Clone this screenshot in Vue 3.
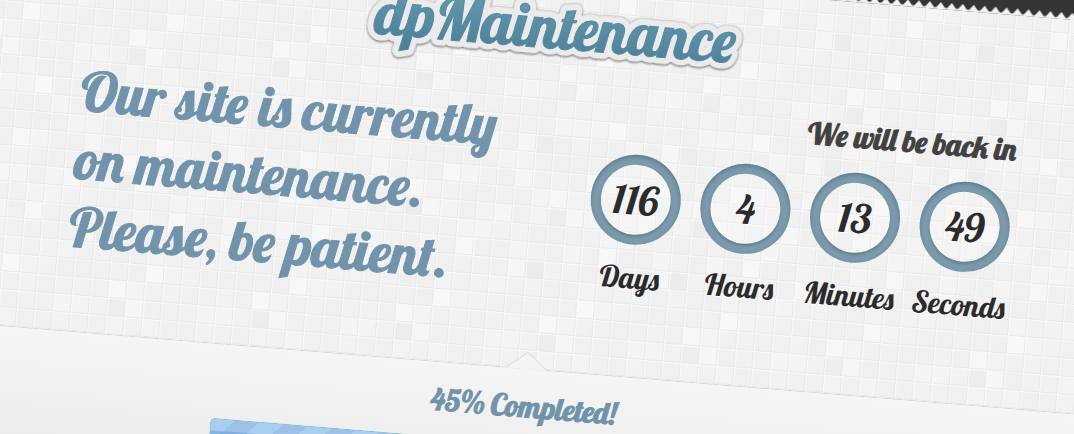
<script setup>
const TILE = 18
const COLS = 8
const ROWS = 14

const accents = {
  '1,0': '#f8f8f8', '7,1': '#f7f7f7', '0,2': '#f6f6f6', '7,2': '#ededed',
  '2,4': '#f8f8f8', '5,5': '#f6f6f6', '6,5': '#ededed', '1,7': '#f7f7f7',
  '5,7': '#f5f5f5', '7,8': '#f7f7f7', '4,9': '#f6f6f6', '0,9': '#f6f6f6',
  '7,9': '#ededed', '2,11': '#f7f7f7', '5,12': '#f6f6f6', '6,12': '#ececec',
}
const shades = ['#f0f0f0', '#f2f2f2', '#f1f1f1', '#f3f3f3', '#f0f0f0', '#f4f4f4', '#f0f0f0']

const tiles = []
for (let row = 0; row < ROWS; row++) {
  for (let col = 0; col < COLS; col++) {
    tiles.push({
      key: `${col},${row}`,
      x: col * TILE,
      y: row * TILE,
      fill: accents[`${col},${row}`] || shades[(col * 5 + row * 3 + ((col * row) % 4)) % shades.length],
    })
  }
}

const message = ['Our site is currently', 'on maintenance.', 'Please, be patient.']
const counters = [
  { value: 116, label: 'Days' },
  { value: 4, label: 'Hours' },
  { value: 13, label: 'Minutes' },
  { value: 49, label: 'Seconds' },
]
const completed = 45
</script>

<template>
  <div class="page">
    <main class="stage">
      <div class="band"></div>

      <section class="panel">
        <svg class="backdrop" aria-hidden="true">
          <defs>
            <pattern id="tiles" x="6" y="75" width="144" height="252" patternUnits="userSpaceOnUse">
              <g v-for="t in tiles" :key="t.key">
                <rect :x="t.x" :y="t.y" width="18" height="18" :fill="t.fill" />
                <path :d="`M${t.x + 0.5} ${t.y}v18M${t.x} ${t.y + 0.5}h18`" stroke="#f9f9f9" fill="none" />
                <path :d="`M${t.x + 17.5} ${t.y + 1}v17M${t.x + 1} ${t.y + 17.5}h17`" stroke="#e8e8e8" fill="none" />
              </g>
            </pattern>
            <pattern id="teeth" x="3" y="-2" width="11" height="9" patternUnits="userSpaceOnUse">
              <path d="M0 0H11V2L7 7Q5.500 8 4 7L0 2Z" fill="#343633" />
            </pattern>
          </defs>
          <rect width="100%" height="100%" fill="url(#tiles)" />
          <rect y="-2" width="100%" height="9" fill="url(#teeth)" />
        </svg>

        <div class="container">
          <h1 class="logo">
            <svg viewBox="0 0 400 96" role="img" aria-label="dpMaintenance">
              <defs>
                <linearGradient id="ink" x1="0" y1="0" x2="0" y2="1">
                  <stop offset="0.3" stop-color="#5f94ab" />
                  <stop offset="1" stop-color="#4b7d95" />
                </linearGradient>
              </defs>
              <text class="logo-edge" x="201" y="59" text-anchor="middle">dpMaintenance</text>
              <text class="logo-ink" x="201" y="59" text-anchor="middle" fill="url(#ink)">dpMaintenance</text>
            </svg>
          </h1>

          <div class="columns">
            <p class="message">
              <span v-for="line in message" :key="line">{{ line }}</span>
            </p>

            <div class="countdown">
              <h2>We will be back in</h2>
              <ul>
                <li v-for="c in counters" :key="c.label">
                  <span class="ring">{{ c.value }}</span>
                  <span class="unit">{{ c.label }}</span>
                </li>
              </ul>
            </div>
          </div>
        </div>
      </section>

      <section class="progress">
        <svg class="notch" viewBox="0 0 40 18" aria-hidden="true">
          <path d="M0 18V17L20 1L40 17V18Z" fill="#f4f4f4" />
          <path d="M0 17L20 1L40 17" fill="none" stroke="#dddddd" />
        </svg>
        <p id="completed">{{ completed }}% Completed!</p>
        <div class="bar" role="progressbar" aria-labelledby="completed" :aria-valuenow="completed">
          <div class="fill" :style="{ width: completed + '%' }"></div>
        </div>
      </section>
    </main>
  </div>
</template>

<style>
body {
  background: #f0f0f0;
}
</style>

<style scoped>
.page {
  height: 100vh;
  overflow: hidden;
  font-family: "Lobster", "Liberation Serif", serif;
  font-weight: 400;
}

.stage {
  width: calc(100% + 36px);
  margin-top: -90px;
  transform: rotate(4.7deg);
  transform-origin: 0 90px;
}

.band {
  height: 15px;
  background: #343633;
}

.panel {
  position: relative;
  padding-bottom: 70px;
  border-bottom: 1px solid #d6d6d6;
}

.backdrop {
  position: absolute;
  inset: 0;
  width: 100%;
  height: 100%;
  overflow: visible;
}

.container {
  position: relative;
  max-width: 940px;
  margin: 0 auto;
}

.logo {
  margin: 0;
  padding-top: 19px;
}

.logo svg {
  display: block;
  width: 400px;
  height: 96px;
  margin: 0 auto;
  overflow: visible;
}

.logo text {
  font-family: "Lobster", "Liberation Serif", serif;
  font-size: 60px;
  font-weight: 400;
}

.logo-edge {
  fill: #ebebeb;
  stroke: #ebebeb;
  stroke-width: 13px;
  stroke-linejoin: round;
  filter: drop-shadow(0 -1px 0 #d2d2d2) drop-shadow(0 1px 1px #666);
}

.logo-ink {
  stroke: #558aa2;
  stroke-width: 1px;
}

.columns {
  display: flex;
  justify-content: space-between;
  padding-top: 10px;
}

.message {
  margin: 0;
  padding-left: 3px;
  font-size: 55px;
  line-height: 68px;
  color: #7193ab;
  -webkit-text-stroke: 1px #7193ab;
}

.message span {
  display: block;
}

.countdown h2 {
  margin: 0;
  font-size: 30px;
  font-weight: 400;
  line-height: 32px;
  text-align: right;
  color: #414141;
  -webkit-text-stroke: 1px #414141;
}

.countdown ul {
  display: flex;
  gap: 20px;
  margin: 20px 0 0;
  padding: 0;
  list-style: none;
}

.countdown li {
  display: flex;
  flex-direction: column;
  align-items: center;
  gap: 17px;
  width: 90px;
  color: #2b2b2b;
}

.ring {
  position: relative;
  display: flex;
  align-items: center;
  justify-content: center;
  box-sizing: border-box;
  width: 90px;
  height: 90px;
  border: 10px solid #7b9bad;
  border-radius: 50%;
  background: rgba(255, 255, 255, 0.2);
  font-size: 40px;
}

.ring::before,
.ring::after {
  content: "";
  position: absolute;
  border-radius: 50%;
}

.ring::before {
  inset: 0;
  box-shadow: 0 2px 3px rgba(50, 70, 80, 0.35);
}

.ring::after {
  inset: -10px;
  box-shadow: inset 0 2px 4px rgba(50, 70, 80, 0.4);
}

.unit {
  font-size: 30px;
  line-height: 32px;
  text-shadow: 0 1px 0 #fff;
}

.progress {
  position: relative;
  display: flex;
  flex-direction: column;
  align-items: center;
  gap: 21px;
  padding: 21px 0 40px;
  background: linear-gradient(#f5f5f5, #e8e8e8);
}

.notch {
  position: absolute;
  top: -18px;
  left: calc(50% - 20px);
  width: 40px;
  height: 18px;
}

.progress p {
  margin: 0;
  font-size: 30px;
  line-height: 32px;
  color: #7193ab;
  -webkit-text-stroke: 1px #7193ab;
}

.bar {
  box-sizing: border-box;
  width: 622px;
  max-width: 90%;
  height: 44px;
  border-radius: 5px;
  background: #dcdcdc;
  overflow: hidden;
}

.fill {
  box-sizing: border-box;
  height: 100%;
  border-top: 1px solid #7fc0de;
  border-left: 1px solid #7fc0de;
  border-radius: 5px 0 0 5px;
  background:
    linear-gradient(transparent 11px, rgba(90, 150, 215, 0.45) 12px),
    repeating-linear-gradient(135deg, #a8cef0 0 17px, #9dc0e6 17px 34px);
}
</style>
